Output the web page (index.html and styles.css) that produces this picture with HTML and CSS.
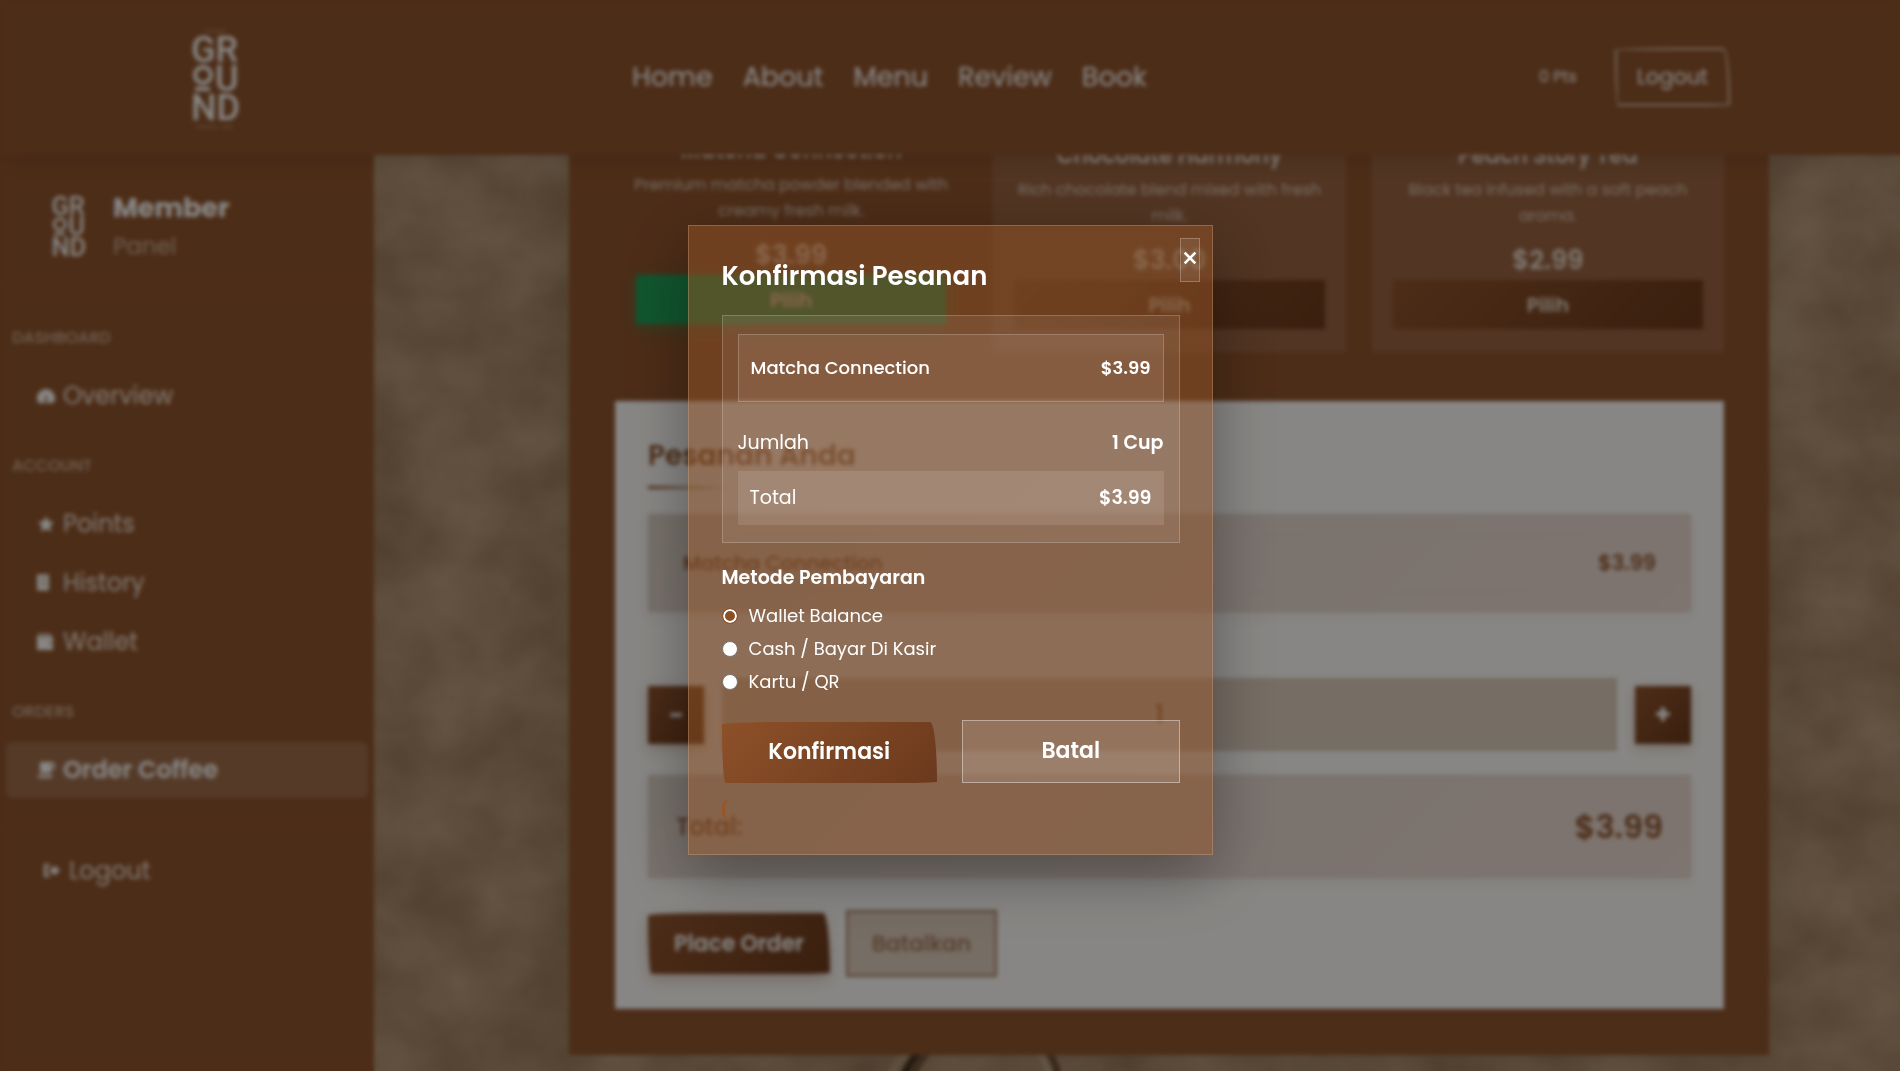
FILE: index.html
```html
<!DOCTYPE html>
<html lang="id">
<head>
  <meta charset="UTF-8" />
  <meta name="viewport" content="width=device-width, initial-scale=1.0"/>
  <title>Ground Coffee - Order Coffee</title>
  <link rel="stylesheet" href="styles.css">
</head>
<body>
  <!-- fabric texture behind the whole page -->
  <svg class="page-texture" aria-hidden="true">
    <defs>
      <filter id="fabric" x="0" y="0" width="100%" height="100%" color-interpolation-filters="sRGB">
        <feTurbulence type="fractalNoise" baseFrequency="0.012 0.014" numOctaves="7" seed="8"/>
        <feColorMatrix values="0.19 0 0 0 0.56  0.2 0 0 0 0.435  0.2 0 0 0 0.315  0 0 0 0 1"/>
      </filter>
    </defs>
    <rect width="100%" height="100%" filter="url(#fabric)"/>
    <g fill="none" stroke-width="7">
      <path d="M890 1074q8-12 20-26" stroke="#b39a7c"/>
      <path d="M904 1074q6-12 18-26" stroke="#453021"/>
      <path d="M913 1074q6-12 18-26" stroke="#75563c"/>
      <path d="M1036 1048q9 10 13 26" stroke="#b8a284"/>
      <path d="M1045 1048q9 10 13 26" stroke="#6d4f36"/>
    </g>
  </svg>

  <header class="navbar">
    <a href="#" class="brand" aria-label="Ground">
      <svg class="logo" viewBox="0 0 48 104">
        <path d="M12 6h22M4 102h21m4 0h12" stroke="#c9ad92" stroke-width="3" opacity=".35"/>
        <text x="-1" y="37">GR</text>
        <text x="23" y="66">U</text>
        <text x="-1" y="95">ND</text>
        <ellipse cx="11" cy="50" rx="8" ry="8"/>
        <path d="M3 64h15" class="stroke"/>
      </svg>
    </a>
    <nav class="nav-links">
      <a href="#home">Home</a>
      <a href="#about">About</a>
      <a href="#menu">Menu</a>
      <a href="#review">Review</a>
      <a href="#book">Book</a>
    </nav>
    <div class="nav-user">
      <span class="points">0 Pts</span>
      <a href="#logout" class="btn-outline sketch">Logout</a>
    </div>
  </header>

  <div class="layout">
    <aside class="sidebar">
      <div class="sidebar-head">
        <svg class="logo logo-small" viewBox="0 10 48 88" aria-hidden="true">
          <text x="-1" y="37">GR</text>
          <text x="23" y="66">U</text>
          <text x="-1" y="95">ND</text>
          <ellipse cx="11" cy="50" rx="8" ry="8"/>
          <path d="M3 64h15" class="stroke"/>
        </svg>
        <div>
          <strong class="panel-role">Member</strong>
          <span class="panel-name">Panel</span>
        </div>
      </div>
      <nav class="side-menu">
        <h6>DASHBOARD</h6>
        <a href="#overview"><svg viewBox="0 0 18 18"><path d="M9 2a9 9 0 0 0-9 9c0 2 .5 3.600 1.500 5h15c1-1.400 1.500-3 1.500-5a9 9 0 0 0-9-9zm-1 10 1-6 1 6a1.500 1.500 0 1 1-2 0z"/></svg>Overview</a>
        <h6>ACCOUNT</h6>
        <a href="#points"><svg viewBox="0 0 18 18"><path d="m9 1 2.500 5.200 5.500.8-4 4 1 5.800-5-2.800-5 2.800 1-5.800-4-4 5.500-.8z"/></svg>Points</a>
        <a href="#history"><svg viewBox="0 0 18 18"><path d="M0 0l2 1 2-1 2 1 2-1 2 1 2-1v17l-2-1-2 1-2-1-2 1-2-1-2 1zM3 5v1h7V5zm0 5v1h7v-1z" fill-rule="evenodd"/></svg>History</a>
        <a href="#wallet"><svg viewBox="0 0 18 18"><path d="M2 1h12v3h2v13H0V3zM2 3v1h11V3zm10 6v2h2V9z" fill-rule="evenodd"/></svg>Wallet</a>
        <h6>ORDERS</h6>
        <a href="#order" class="active"><svg viewBox="0 0 18 18"><path d="M3 1h12a3 4 0 0 1 0 8h-1v3H3zm11 2v4h1a1 2 0 0 0 0-4zM0 14h16l-2 3H2z" fill-rule="evenodd"/></svg>Order Coffee</a>
      </nav>
      <div class="side-foot">
        <a href="#logout"><svg viewBox="0 0 18 18"><path d="M1 2h6v2H4v9h3v2H1zM7 6h4V3l6 5.500L11 14v-3H7z"/></svg>Logout</a>
      </div>
    </aside>

    <main class="content">
      <section class="order-page">
        <div class="menu-grid">
          <article class="menu-card selected">
            <h3>Matcha Connection</h3>
            <p>Premium matcha powder blended with creamy fresh milk.</p>
            <div class="price">$3.99</div>
            <button type="button" class="btn-pick">Pilih</button>
          </article>
          <article class="menu-card">
            <h3>Chocolate Harmony</h3>
            <p>Rich chocolate blend mixed with fresh milk.</p>
            <div class="price">$3.00</div>
            <button type="button" class="btn-pick">Pilih</button>
          </article>
          <article class="menu-card">
            <h3>Peach Story Tea</h3>
            <p>Black tea infused with a soft peach aroma.</p>
            <div class="price">$2.99</div>
            <button type="button" class="btn-pick">Pilih</button>
          </article>
        </div>

        <div class="order-box">
          <h2>Pesanan Anda</h2>
          <div class="order-items">
            <div class="order-item">
              <span>Matcha Connection</span>
              <strong>$3.99</strong>
            </div>
          </div>
          <div class="qty-row">
            <button type="button" class="btn-qty" aria-label="Kurangi">−</button>
            <input type="text" class="qty-input" value="1" aria-label="Jumlah cup">
            <button type="button" class="btn-qty" aria-label="Tambah">+</button>
          </div>
          <div class="order-total">
            <span>Total:</span>
            <strong>$3.99</strong>
          </div>
          <div class="order-actions">
            <button type="button" class="btn-main sketch">Place Order</button>
            <button type="button" class="btn-cancel">Batalkan</button>
          </div>
        </div>
      </section>
    </main>
  </div>

  <div class="modal-overlay">
    <form class="modal" role="dialog" aria-labelledby="modal-title">
      <button type="button" class="modal-close" aria-label="Tutup">
        <svg viewBox="0 0 12 12"><path d="M2 2l8 8M10 2l-8 8"/></svg>
      </button>
      <h2 id="modal-title">Konfirmasi Pesanan</h2>

      <div class="summary">
        <div class="summary-item">
          <span>Matcha Connection</span>
          <strong>$3.99</strong>
        </div>
        <div class="summary-row">
          <span>Jumlah</span>
          <strong>1 Cup</strong>
        </div>
        <div class="summary-row summary-total">
          <span>Total</span>
          <strong>$3.99</strong>
        </div>
      </div>

      <fieldset class="payment">
        <legend>Metode Pembayaran</legend>
        <label><input type="radio" name="payment" value="wallet" checked> Wallet Balance</label>
        <label><input type="radio" name="payment" value="cash"> Cash / Bayar Di Kasir</label>
        <label><input type="radio" name="payment" value="card"> Kartu / QR</label>
      </fieldset>

      <div class="modal-actions">
        <button type="submit" class="btn-confirm sketch">Konfirmasi</button>
        <button type="button" class="btn-back">Batal</button>
      </div>
      <div class="modal-message"></div>
    </form>
  </div>
</body>
</html>
```
FILE: styles.css
```css
:root {
  --primary: #8b522c;
  --primary-dark: #6b391b;
  --cream: #f7f5f1;
  --tan: #dac5b2;
  --green: #1f9d55;
}
* {
  box-sizing: border-box;
  margin: 0;
  padding: 0;
}
body {
  font-family: "Poppins", "Inter", "Open Sans", sans-serif;
  font-size: 16px;
  line-height: 26px;
  color: white;
  background-color: #a98d6f;
  height: 100vh;
  overflow: hidden;
}
a {
  color: inherit;
  text-decoration: none;
}
button, input {
  font: inherit;
  color: inherit;
  border: none;
}
button {
  cursor: pointer;
}
.page-texture {
  position: fixed;
  inset: 0;
  width: 100%;
  height: 100%;
  z-index: -1;
}
/* hand drawn edges */
.sketch {
  border-radius: 255px 30px 225px 15px / 10px 255px 5px 255px;
}

/* ==== Navbar ==== */
.navbar {
  position: fixed;
  top: 0;
  left: 0;
  right: 0;
  z-index: 10;
  height: 155px;
  padding: 0 170px 2px 192px;
  display: flex;
  justify-content: space-between;
  align-items: center;
  background-color: var(--primary);
  box-shadow: 0 4px 20px rgba(0,0,0,0.12);
}
.brand {
  display: block;
}
.logo {
  display: block;
  width: 48px;
  height: 104px;
  overflow: visible;
  font-family: "Roboto", sans-serif;
  font-size: 36px;
  font-weight: 500;
  fill: var(--cream);
}
.logo ellipse, .logo .stroke {
  fill: none;
  stroke: var(--cream);
  stroke-width: 4;
}
.logo-small {
  width: 34px;
  height: 62px;
}
.nav-links {
  display: flex;
  gap: 30px;
  font-size: 27px;
}
.nav-user {
  display: flex;
  justify-content: flex-end;
  align-items: center;
  gap: 38px;
}
.btn-outline {
  border: 2px solid var(--tan);
  padding: 14px 20px;
  font-size: 21px;
}

/* ==== Sidebar ==== */
.layout {
  display: flex;
  min-height: 100vh;
}
.sidebar {
  flex: 0 0 374px;
  padding-top: 154px;
  background-color: var(--primary);
}
.sidebar-head {
  display: flex;
  align-items: center;
  gap: 27px;
  height: 134px;
  padding: 18px 52px 6px;
  margin-bottom: 30px;
  border-bottom: 1px solid rgba(255,255,255,0.04);
}
.panel-role, .panel-name {
  display: block;
  line-height: 38px;
}
.panel-role {
  font-size: 27px;
  color: var(--cream);
}
.panel-name {
  font-size: 23px;
  color: #c9ac95;
}
.side-menu {
  padding: 0 6px;
}
.side-menu h6 {
  padding: 8px 6px;
  font-size: 16px;
  font-weight: 500;
  line-height: 24px;
  color: #cbae97;
  margin: 22px 0 10px;
}
.side-menu h6:first-child {
  margin-top: 0;
}
.side-menu a, .side-foot a {
  display: flex;
  align-items: center;
  gap: 8px;
  height: 56px;
  padding: 0 31px;
  margin-bottom: 3px;
  border-radius: 6px;
  font-size: 24px;
  color: #ecddd0;
}
.side-menu a.active {
  background-color: rgba(255,255,255,0.14);
  font-weight: 600;
  color: var(--cream);
}
.side-menu svg, .side-foot svg {
  width: 18px;
  height: 18px;
  fill: var(--cream);
}
.side-foot {
  margin-top: 29px;
  padding: 15px 12px;
  border-top: 1px solid rgba(255,255,255,0.04);
}

/* ==== Content ==== */
.content {
  flex: 1;
  padding: 0 64px 16px 128px;
}
.order-page {
  max-width: 1200px;
  margin: 0 auto;
  padding: 0 45px 46px 46px;
  background-color: var(--primary);
  box-shadow: 0 10px 40px rgba(0,0,0,0.1);
}
.menu-grid {
  display: grid;
  grid-template-columns: repeat(3, 1fr);
  gap: 26px;
  margin-bottom: 49px;
}
.menu-card {
  padding: 138px 20px 22px;
  border: 1px solid rgba(255,255,255,0.03);
  background-color: rgba(255,255,255,0.09);
  text-align: center;
}
.menu-card h3 {
  font-size: 22px;
  font-weight: 600;
  line-height: 34px;
  margin-bottom: 4px;
  color: #e8dacd;
}
.menu-card p {
  font-size: 16px;
  color: #dcc8b7;
  margin: 0 -9px 13px;
}
.price {
  font-size: 26px;
  font-weight: 600;
  line-height: 36px;
  margin-bottom: 2px;
  color: #e8dacd;
}
.btn-pick {
  width: 100%;
  height: 49px;
  font-size: 20px;
  font-weight: 600;
  color: #e8dacd;
  background: linear-gradient(135deg, var(--primary), var(--primary-dark));
}
.menu-card.selected {
  transform: translateY(-5px);
  background-color: transparent;
  border-color: transparent;
}
.menu-card.selected .btn-pick {
  background: var(--green);
  box-shadow: 0 4px 15px rgba(31,157,85,0.4);
}

/* ==== Order box ==== */
.order-box {
  padding: 32px 32px 31px;
  border: 1px solid #efeae4;
  background-color: var(--cream);
  color: var(--primary);
}
.order-box h2 {
  font-size: 28px;
  font-weight: 600;
  line-height: 43px;
  margin-bottom: 25px;
}
.order-box h2::after {
  content: "";
  display: block;
  width: 80px;
  height: 3px;
  margin-top: 9px;
  background: linear-gradient(90deg, var(--primary), transparent);
}
.order-items, .order-total {
  background: linear-gradient(135deg, #d9cdc3, #e6d5cc);
  border: 1px solid #d8c6b9;
  box-shadow: 0 4px 12px rgba(139,80,45,0.08);
}
.order-items {
  padding: 19px;
  margin-bottom: 66px;
}
.order-item {
  display: flex;
  justify-content: space-between;
  align-items: center;
  height: 58px;
  padding: 0 14px;
  border: 1px solid rgba(139,80,45,0.05);
  font-size: 20px;
  font-weight: 500;
}
.order-box strong {
  font-weight: 600;
}
.order-item strong {
  font-size: 21px;
}
.qty-row {
  display: flex;
  align-items: center;
  gap: 18px;
  margin-bottom: 24px;
}
.btn-qty {
  width: 56px;
  height: 58px;
  font-size: 26px;
  font-weight: 700;
  color: var(--cream);
  background: linear-gradient(135deg, var(--primary), var(--primary-dark));
  box-shadow: 0 4px 12px rgba(139,80,45,0.3);
}
.qty-input {
  flex: 1;
  min-width: 0;
  height: 73px;
  padding: 0 40px 0 20px;
  border: 1px solid #cdbba9;
  background-color: #d7c6b6;
  font-size: 24px;
  font-weight: 500;
  text-align: center;
}
.order-total {
  display: flex;
  justify-content: space-between;
  align-items: center;
  height: 103px;
  padding: 0 27px;
  margin-bottom: 32px;
  font-size: 24px;
  font-weight: 500;
}
.order-total strong {
  font-size: 32px;
}
.order-actions {
  display: flex;
  align-items: center;
  gap: 16px;
}
.btn-main {
  height: 61px;
  padding: 0 26px;
  font-size: 22px;
  font-weight: 600;
  color: var(--cream);
  background: linear-gradient(135deg, var(--primary), var(--primary-dark));
  box-shadow: 0 6px 15px rgba(139,80,45,0.3);
}
.btn-cancel {
  height: 67px;
  padding: 0 24px;
  border: 2px solid #a07355;
  font-size: 22px;
  font-weight: 500;
  color: #9a6a4a;
  background-color: #d7c6b6;
}

/* ==== Modal ==== */
.modal-overlay {
  position: fixed;
  inset: 0;
  z-index: 20;
  display: flex;
  justify-content: center;
  align-items: center;
  padding-top: 8px;
  background-color: rgba(0,0,0,0.45);
  backdrop-filter: blur(2px);
}
.modal {
  position: relative;
  width: 90%;
  max-width: 525px;
  padding: 32px 32px 32px 33px;
  border: 1px solid rgba(222,184,150,0.3);
  background: linear-gradient(135deg, rgba(146,84,38,0.5), rgba(146,84,42,0.5));
  box-shadow: 0 20px 60px rgba(0,0,0,0.35);
}
.modal h2 {
  font-size: 26px;
  font-weight: 600;
  line-height: 36px;
  margin-bottom: 21px;
}
.modal strong {
  font-weight: 600;
}
.modal-close {
  position: absolute;
  top: 12px;
  right: 12px;
  width: 20px;
  height: 44px;
  padding-bottom: 3px;
  border: 1px solid rgba(255,255,255,0.25);
  background-color: rgba(255,255,255,0.08);
}
.modal-close svg {
  display: block;
  width: 16px;
  height: 16px;
  margin: 0 auto;
  fill: none;
  stroke: white;
  stroke-width: 2;
}
.summary {
  padding: 18px 15px 17px;
  border: 1px solid rgba(255,255,255,0.2);
  background-color: rgba(255,255,255,0.08);
}
.summary-item, .summary-row {
  display: flex;
  justify-content: space-between;
  align-items: center;
}
.summary-item {
  height: 68px;
  padding: 0 12px;
  margin-bottom: 20px;
  border: 1px solid rgba(255,255,255,0.2);
  background-color: rgba(255,255,255,0.08);
  font-size: 18px;
  font-weight: 500;
}
.summary-row {
  height: 42px;
  font-size: 19px;
}
.summary-total {
  height: 54px;
  padding: 0 12px;
  margin-top: 7px;
  background-color: rgba(255,255,255,0.1);
}
.payment {
  border: none;
  margin: 20px 0 21px;
}
.payment legend {
  font-size: 19px;
  font-weight: 600;
  line-height: 30px;
  margin-bottom: 7px;
}
.payment label {
  display: flex;
  align-items: center;
  gap: 11px;
  height: 33px;
  font-size: 18px;
}
.payment input {
  appearance: none;
  width: 16px;
  height: 16px;
  border: 1px solid #767676;
  border-radius: 50%;
  background-color: white;
}
.payment input:checked {
  border-color: var(--primary);
  background-color: #8b4f25;
  box-shadow: inset 0 0 0 2px white;
}
.modal-actions {
  display: flex;
  align-items: flex-end;
  gap: 25px;
  margin-bottom: 15px;
}
.modal-actions button {
  flex: 1;
  height: 61px;
  font-size: 22px;
  font-weight: 600;
}
.btn-confirm {
  background: linear-gradient(135deg, #8d5129, #6b391d);
}
.modal-actions .btn-back {
  height: 63px;
  border: 1px solid rgba(255,255,255,0.4);
  background-color: rgba(255,255,255,0.12);
}
.modal-message {
  height: 24px;
  border-left: 3px solid #9a5526;
  border-radius: 10px;
}

@media (max-width: 900px) {
  .sidebar { display: none; }
  .content { padding: 0 15px 15px; }
  .menu-grid { grid-template-columns: 1fr; }
  .navbar { padding: 0 20px; }
}
```
